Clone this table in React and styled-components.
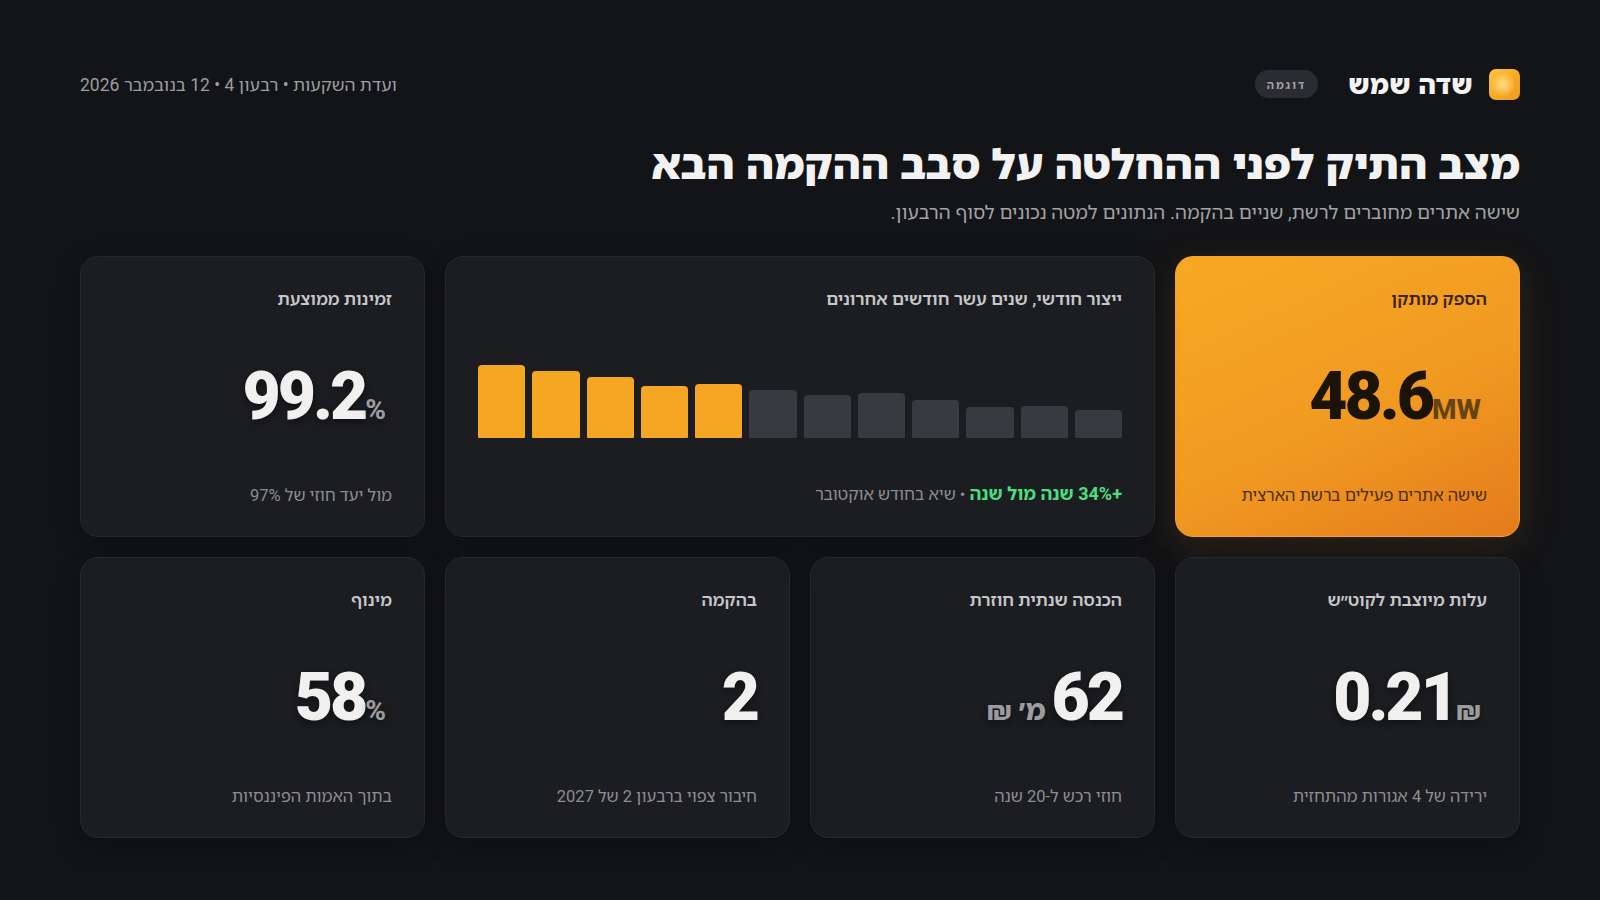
import React from "react";
import styled, { createGlobalStyle } from "styled-components";

const GlobalStyle = createGlobalStyle`
  html, body {
    margin: 0;
    background: #131417;
  }
  body {
    font-family: Roboto, "Noto Sans Hebrew", "Noto Sans", sans-serif;
    color: #ececec;
  }
  * { box-sizing: border-box; }
`;

const Page = styled.div`
  direction: rtl;
  width: 1600px;
  min-height: 900px;
  padding: 68px 80px 40px;
  display: flex;
  flex-direction: column;
`;

const Header = styled.header`
  display: flex;
  align-items: center;
  justify-content: space-between;
  height: 32px;
`;

const Brand = styled.div`
  display: flex;
  align-items: center;
  gap: 16px;
`;

const LogoMark = styled.div`
  width: 31px;
  height: 31px;
  border-radius: 7px;
  background:
    radial-gradient(circle at 45% 50%, rgba(255, 226, 140, 0.9) 0, rgba(255, 210, 90, 0) 55%),
    linear-gradient(135deg, #ffc53d 0%, #f5a623 60%, #f09a1c 100%);
`;

const BrandName = styled.div`
  font-family: "Noto Sans Hebrew", sans-serif;
  font-weight: 900;
  font-size: 26px;
  color: #f3f3f3;
  letter-spacing: 0.3px;
`;

const Badge = styled.span`
  margin-inline-start: 14px;
  padding: 0 12px;
  height: 28px;
  display: inline-flex;
  align-items: center;
  border-radius: 14px;
  background: #2a2c31;
  color: #a3a4a8;
  font-family: "Noto Sans Hebrew", sans-serif;
  font-weight: 700;
  font-size: 11px;
  letter-spacing: 2px;
`;

const Meta = styled.div`
  font-size: 17.5px;
  color: #9c9da1;
`;

const Title = styled.h1`
  margin: 38px 0 0;
  font-family: "Noto Sans Hebrew", sans-serif;
  font-weight: 900;
  font-size: 41.7px;
  line-height: 1.2;
  color: #f2f2f2;
`;

const Subtitle = styled.p`
  margin: 12px 0 0;
  font-size: 19px;
  line-height: 1.4;
  color: #a2a3a7;
`;

const Grid = styled.div`
  margin-top: 29px;
  display: grid;
  grid-template-columns: repeat(4, 1fr);
  grid-auto-rows: 281px;
  gap: 20px;
`;

const Card = styled.section`
  grid-column: span ${({ $span }) => $span || 1};
  border-radius: 18px;
  padding: 30px 32px 29px;
  display: flex;
  flex-direction: column;
  justify-content: space-between;
  background: ${({ $accent }) =>
    $accent ? "linear-gradient(155deg, #f6a925 0%, #f19a21 55%, #e47b1c 100%)" : "#1c1d21"};
  border: 1px solid ${({ $accent }) => ($accent ? "#f3a52a" : "#26282c")};
  box-shadow: ${({ $accent }) =>
    $accent ? "0 10px 40px rgba(240, 150, 30, 0.12)" : "0 8px 24px rgba(0, 0, 0, 0.25)"};
`;

const Label = styled.div`
  font-size: 17.3px;
  font-weight: 600;
  line-height: 1.4;
  color: ${({ $accent }) => ($accent ? "#3b2405" : "#c6c7ca")};
`;

const Value = styled.div`
  font-family: Roboto, "Noto Sans Hebrew", sans-serif;
  font-weight: 900;
  font-size: 66px;
  line-height: 1;
  letter-spacing: -3px;
  color: ${({ $accent }) => ($accent ? "#1c1307" : "#f1f0ee")};
  text-shadow: ${({ $accent }) => ($accent ? "none" : "0 3px 8px rgba(0, 0, 0, 0.45)")};
`;

const Unit = styled.span`
  margin-inline-start: 6px;
  font-size: 28px;
  font-weight: 800;
  letter-spacing: 0;
  color: ${({ $accent }) => ($accent ? "#664312" : "#9c9c9e")};
`;

const Foot = styled.div`
  font-size: 16.5px;
  line-height: 1.4;
  color: ${({ $accent }) => ($accent ? "#4a2d07" : "#8d8e92")};
`;

const Up = styled.span`
  color: #4ade80;
  font-weight: 700;
  font-size: 18px;
`;

const Bars = styled.div`
  direction: ltr;
  height: 88px;
  display: flex;
  align-items: flex-end;
  gap: 7px;
  margin-bottom: 4px;
`;

const Bar = styled.div`
  flex: 1;
  border-radius: 4px 4px 1px 1px;
  background: ${({ $hot }) => ($hot ? "#f5a623" : "#383a3f")};
`;

const monthly = [73, 67, 61, 52, 54, 48, 43, 45, 38, 31, 32, 28];

const Stat = ({ label, value, unit, foot, accent }) => (
  <Card $accent={accent}>
    <Label $accent={accent}>{label}</Label>
    <Value $accent={accent}>
      {value}
      {unit && <Unit $accent={accent}>{unit}</Unit>}
    </Value>
    <Foot $accent={accent}>{foot}</Foot>
  </Card>
);

export default function App() {
  return (
    <>
      <GlobalStyle />
      <Page>
        <Header>
          <Brand>
            <LogoMark />
            <BrandName>שדה שמש</BrandName>
            <Badge>דוגמה</Badge>
          </Brand>
          <Meta>ועדת השקעות • רבעון 4 • 12 בנובמבר 2026</Meta>
        </Header>

        <Title>מצב התיק לפני ההחלטה על סבב ההקמה הבא</Title>
        <Subtitle>שישה אתרים מחוברים לרשת, שניים בהקמה. הנתונים למטה נכונים לסוף הרבעון.</Subtitle>

        <Grid>
          <Stat accent label="הספק מותקן" value="48.6" unit="MW" foot="שישה אתרים פעילים ברשת הארצית" />

          <Card $span={2}>
            <Label>ייצור חודשי, שנים עשר חודשים אחרונים</Label>
            <Bars>
              {monthly.map((h, i) => (
                <Bar key={i} $hot={i < 5} style={{ height: `${h}px` }} />
              ))}
            </Bars>
            <Foot>
              <Up>+34% שנה מול שנה</Up> • שיא בחודש אוקטובר
            </Foot>
          </Card>

          <Stat label="זמינות ממוצעת" value="99.2" unit="%" foot="מול יעד חוזי של 97%" />

          <Stat label="עלות מיוצבת לקוט״ש" value="0.21" unit="₪" foot="ירידה של 4 אגורות מהתחזית" />
          <Stat label="הכנסה שנתית חוזרת" value="62" unit="מ׳ ₪" foot="חוזי רכש ל-20 שנה" />
          <Stat label="בהקמה" value="2" foot="חיבור צפוי ברבעון 2 של 2027" />
          <Stat label="מינוף" value="58" unit="%" foot="בתוך האמות הפיננסיות" />
        </Grid>
      </Page>
    </>
  );
}
